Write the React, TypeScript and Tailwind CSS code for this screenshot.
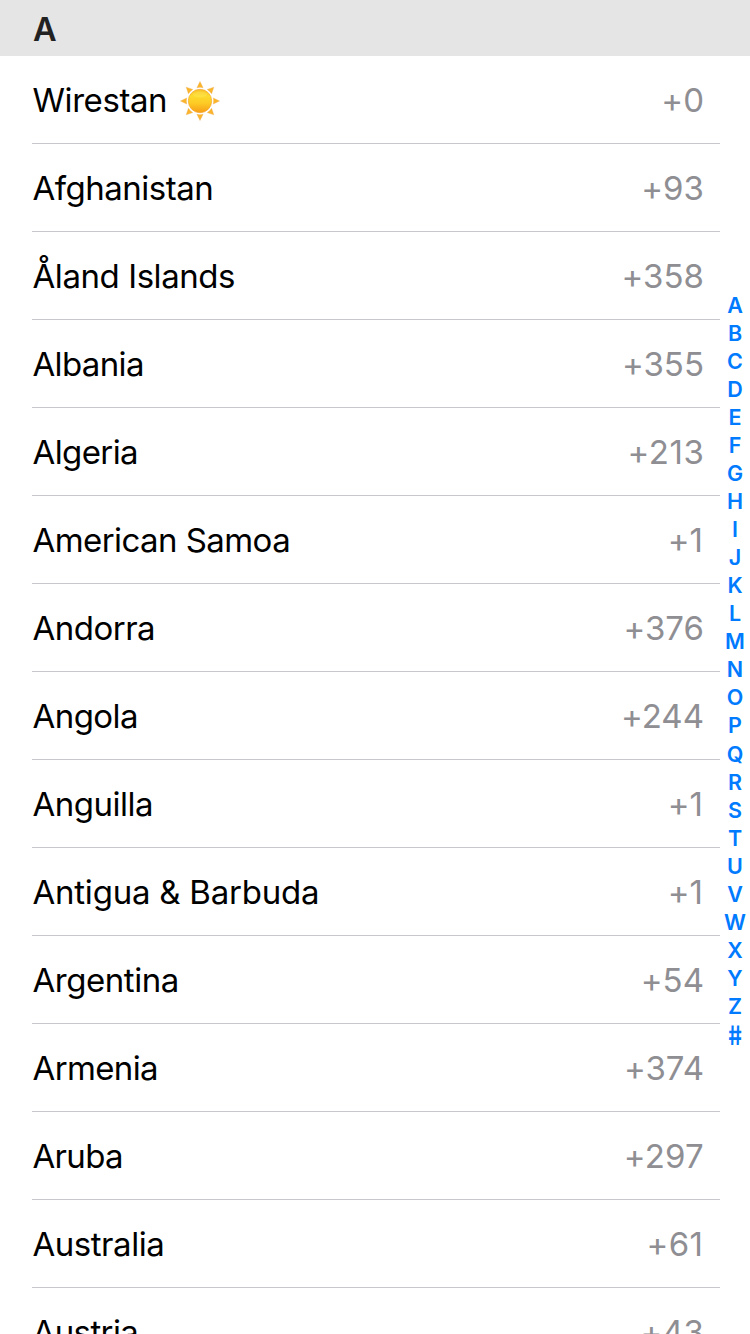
type Country = { name: string; code: string; tracking: string; codeClass?: string; sunny?: boolean };

const countries: Country[] = [
  { name: 'Wirestan', code: '+0', tracking: 'tracking-[-0.42px]', sunny: true },
  { name: 'Afghanistan', code: '+93', tracking: 'tracking-[-0.5px]' },
  { name: 'Åland Islands', code: '+358', tracking: 'tracking-[-0.43px]' },
  { name: 'Albania', code: '+355', tracking: 'tracking-[-0.65px]' },
  { name: 'Algeria', code: '+213', tracking: 'tracking-[-0.6px]', codeClass: 'tracking-[0.6px] -mr-[0.6px]' },
  { name: 'American Samoa', code: '+1', tracking: 'tracking-[-0.57px]', codeClass: 'pr-px' },
  { name: 'Andorra', code: '+376', tracking: 'tracking-[-0.5px]' },
  { name: 'Angola', code: '+244', tracking: 'tracking-[-0.55px]' },
  { name: 'Anguilla', code: '+1', tracking: 'tracking-[-0.5px]', codeClass: 'pr-px' },
  { name: 'Antigua & Barbuda', code: '+1', tracking: 'tracking-[-0.23px]', codeClass: 'pr-px' },
  { name: 'Argentina', code: '+54', tracking: 'tracking-[-0.45px]' },
  { name: 'Armenia', code: '+374', tracking: 'tracking-[-0.63px]' },
  { name: 'Aruba', code: '+297', tracking: 'tracking-[-0.68px]', codeClass: 'tracking-[0.2px]' },
  { name: 'Australia', code: '+61', tracking: 'tracking-[-0.47px]', codeClass: 'tracking-[0.4px] pr-[0.6px]' },
  { name: 'Austria', code: '+43', tracking: 'tracking-[-0.6px]' },
];

function Sun() {
  return (
    <svg className="ml-[12.5px] size-10" viewBox="-20 -20 40 40" aria-label="sun">
      <defs>
        <linearGradient id="disc" x1="0" y1="0" x2="0" y2="1">
          <stop offset="0" stopColor="#f9c02a" />
          <stop offset="0.3" stopColor="#fddb2e" />
          <stop offset="0.6" stopColor="#fdca24" />
          <stop offset="1" stopColor="#f79d16" />
        </linearGradient>
      </defs>
      {[0, 45, 90, 135, 180, 225, 270, 315].map((angle) => (
        <path
          key={angle}
          d="M0 -19.5 L3.1 -13.3 Q0 -14 -3.1 -13.3 Z"
          fill="#fab52b"
          stroke="#ecaa55"
          strokeWidth="0.35"
          transform={`rotate(${angle})`}
        />
      ))}
      <circle r="11.7" fill="url(#disc)" stroke="#f2a12b" strokeWidth="0.6" />
      <ellipse cy="-6.5" rx="7" ry="3" fill="#fff06a" opacity="0.3" />
    </svg>
  );
}

function Letter({ children }: { children: string }) {
  return <span className="block h-7">{children}</span>;
}

export default function App() {
  return (
    <div className="relative h-[1334px] w-[750px] overflow-hidden bg-white font-['Inter',sans-serif]">
      <div className="flex h-14 items-center bg-[#e5e5e5] pt-[3px] pl-[33px] text-[32.5px] leading-[50px] font-semibold text-[#222]">
        A
      </div>
      {countries.map(({ name, code, tracking, codeClass, sunny }) => (
        <div
          key={name}
          className="mr-[30px] ml-8 flex h-[88px] items-center justify-between border-b border-[#c8c7cc] pt-0.5 pr-4 pl-[0.5px] text-[33px] tracking-[0.02px]"
        >
          <span className="flex items-center text-black">
            <span className={tracking}>{name}</span>
            {sunny && <Sun />}
          </span>
          <span className={`text-[#8e8e93] ${codeClass ?? ''}`}>{code}</span>
        </div>
      ))}
      <div className="absolute top-[291px] right-0 w-[30px] text-center text-[21.5px] leading-7 font-semibold text-[#007aff]">
        {'ABCDEFGHIJKLMNOP'.split('').map((l) => (
          <Letter key={l}>{l}</Letter>
        ))}
        <div className="pt-px">
          {'QRSTUVWXYZ'.split('').map((l) => (
            <Letter key={l}>{l}</Letter>
          ))}
        </div>
        <span className="mt-px block h-7 origin-center scale-y-[1.24] -skew-x-[-8deg]">#</span>
      </div>
    </div>
  );
}
